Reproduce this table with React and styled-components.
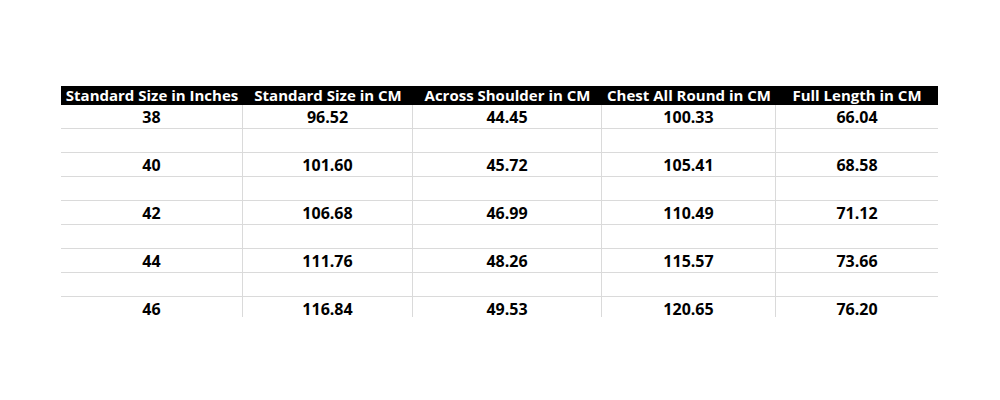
import styled, { createGlobalStyle } from 'styled-components';

const GlobalStyle = createGlobalStyle`
  body {
    margin: 0;
    background: #ffffff;
    font-family: 'Open Sans', 'Liberation Sans', sans-serif;
  }
`;

const Page = styled.div`
  width: 1000px;
  height: 400px;
  padding: 86px 0 0 61px;
  box-sizing: border-box;
`;

const Sheet = styled.div`
  width: 877px;
`;

const Row = styled.div`
  display: grid;
  grid-template-columns: 182px 170px 189px 174px 162px;
  height: ${props => (props.head ? '19px' : props.end ? '20px' : '24px')};
  box-sizing: border-box;
  padding-bottom: ${props => (props.head ? '2px' : '0')};
  background: ${props => (props.head ? '#000000' : '#ffffff')};
  border-bottom: ${props => (props.head || props.end ? 'none' : '1px solid #dadada')};
`;

const Cell = styled.div`
  display: flex;
  align-items: ${props => (props.end ? 'flex-end' : 'center')};
  justify-content: center;
  white-space: nowrap;
  line-height: 16px;
  font-weight: 700;
  font-size: ${props => (props.head ? '15px' : '16px')};
  color: ${props => (props.head ? '#ffffff' : '#000000')};
  border-right: ${props => (props.head || props.last ? 'none' : '1px solid #dadada')};
`;

const headers = [
  'Standard Size in Inches',
  'Standard Size in CM',
  'Across Shoulder in CM',
  'Chest All Round in CM',
  'Full Length in CM',
];

const sizes = [
  ['38', '96.52', '44.45', '100.33', '66.04'],
  ['40', '101.60', '45.72', '105.41', '68.58'],
  ['42', '106.68', '46.99', '110.49', '71.12'],
  ['44', '111.76', '48.26', '115.57', '73.66'],
  ['46', '116.84', '49.53', '120.65', '76.20'],
];

const rows = sizes.flatMap((r, i) => (i < sizes.length - 1 ? [r, ['', '', '', '', '']] : [r]));

export default function App() {
  return (
    <>
      <GlobalStyle />
      <Page>
        <Sheet>
          <Row head>
            {headers.map(h => (
              <Cell head key={h}>{h}</Cell>
            ))}
          </Row>
          {rows.map((r, i) => {
            const end = i === rows.length - 1;
            return (
              <Row key={i} end={end}>
                {r.map((v, j) => (
                  <Cell key={j} end={end} last={j === r.length - 1}>{v}</Cell>
                ))}
              </Row>
            );
          })}
        </Sheet>
      </Page>
    </>
  );
}
